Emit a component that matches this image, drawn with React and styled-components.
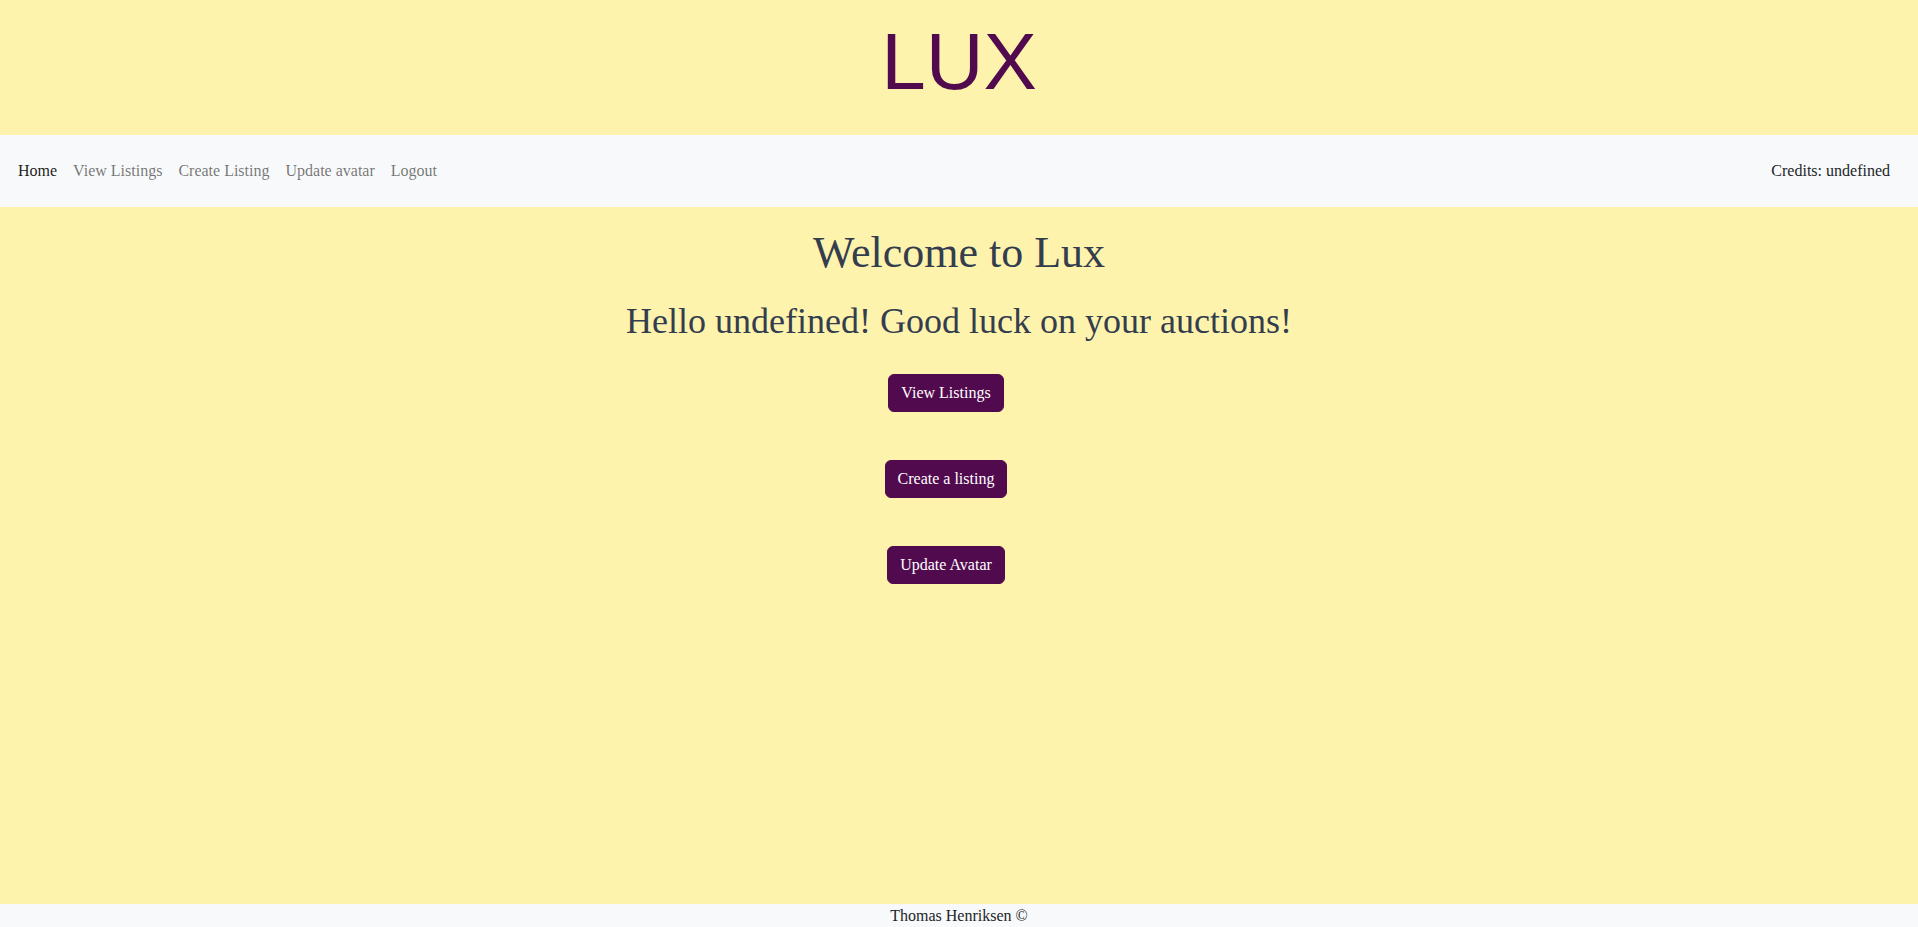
import React from "react";
import styled, { createGlobalStyle } from "styled-components";

const GlobalStyle = createGlobalStyle`
  html, body {
    margin: 0;
    padding: 0;
    background: #fef3ad;
    font-family: "Liberation Serif", "Times New Roman", serif;
    color: #212529;
  }
  * { box-sizing: border-box; }
`;

// Layout
const Page = styled.div`
  display: flex;
  flex-direction: column;
  min-height: 100vh;
  background: #fef3ad;
`;

const Header = styled.header`
  display: flex;
  justify-content: center;
  padding: 22px 0 33px;
`;

const Logo = styled.h1`
  margin: 0;
  font-family: "Liberation Sans", Arial, sans-serif;
  font-weight: 400;
  font-size: 80px;
  line-height: 80px;
  color: #520a4f;
`;

const NavBar = styled.nav`
  display: flex;
  align-items: center;
  justify-content: space-between;
  height: 72px;
  padding: 0 28px 0 10px;
  background: #f8f9fa;
`;

const NavList = styled.ul`
  display: flex;
  list-style: none;
  margin: 0;
  padding: 0;
`;

const NavLink = styled.a`
  display: block;
  padding: 8px;
  font-size: 16px;
  line-height: 24px;
  text-decoration: none;
  color: ${(p) => (p.$active ? "rgba(0, 0, 0, 0.9)" : "rgba(0, 0, 0, 0.55)")};
  cursor: pointer;
`;

const Credits = styled.span`
  font-size: 16px;
  line-height: 24px;
  color: #212529;
`;

const Main = styled.main`
  flex: 1;
  display: flex;
  flex-direction: column;
  align-items: center;
  padding-top: 20px;
`;

const Title = styled.h1`
  margin: 0 0 20px;
  font-size: 44px;
  font-weight: 400;
  line-height: 1.2;
  color: #333d4d;
`;

const SubTitle = styled.h2`
  margin: 0 0 31px;
  font-size: 36px;
  font-weight: 400;
  line-height: 1.2;
  color: #333d4d;
`;

const Actions = styled.div`
  display: flex;
  flex-direction: column;
  align-items: center;
  gap: 48px;
  padding-right: 26px;
`;

const Button = styled.button`
  font-family: "Liberation Serif", "Times New Roman", serif;
  font-size: 16px;
  line-height: 24px;
  padding: 6px 12px;
  border: 1px solid #520a4f;
  border-radius: 6px;
  background: #520a4f;
  color: #ffffff;
  cursor: pointer;
`;

const Footer = styled.footer`
  background: #f8f9fa;
  text-align: center;
  font-size: 16px;
  line-height: 23px;
  color: #212529;
`;

const links = ["Home", "View Listings", "Create Listing", "Update avatar", "Logout"];

export default function App() {
  return (
    <Page>
      <GlobalStyle />
      <Header>
        <Logo>LUX</Logo>
      </Header>
      <NavBar>
        <NavList>
          {links.map((label, i) => (
            <li key={label}>
              <NavLink $active={i === 0}>{label}</NavLink>
            </li>
          ))}
        </NavList>
        <Credits>Credits: undefined</Credits>
      </NavBar>
      <Main>
        <Title>Welcome to Lux</Title>
        <SubTitle>Hello undefined! Good luck on your auctions!</SubTitle>
        <Actions>
          <Button>View Listings</Button>
          <Button>Create a listing</Button>
          <Button>Update Avatar</Button>
        </Actions>
      </Main>
      <Footer>Thomas Henriksen ©</Footer>
    </Page>
  );
}
